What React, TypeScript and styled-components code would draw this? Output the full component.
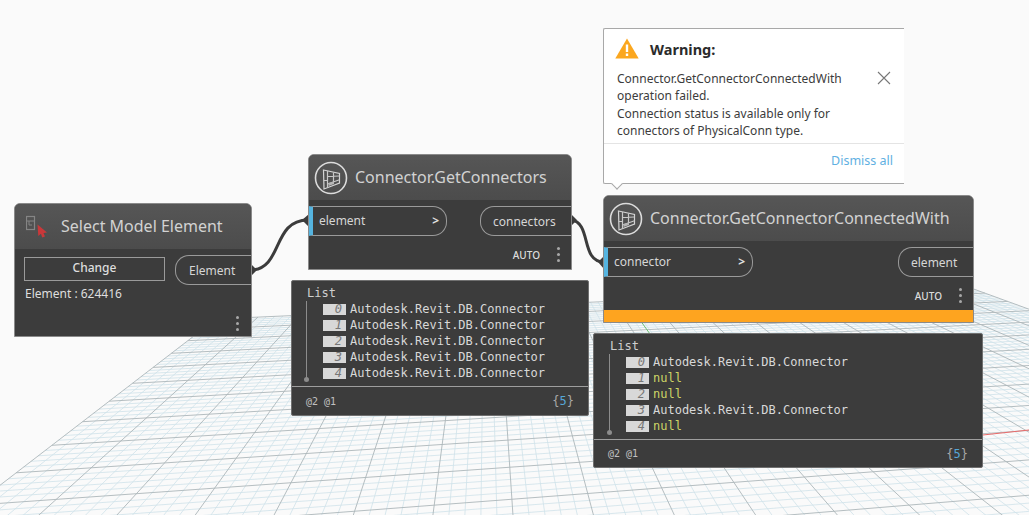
import React from "react";
import styled, { createGlobalStyle } from "styled-components";

const Global = createGlobalStyle`
  html, body { margin: 0; padding: 0; width: 1029px; height: 515px; overflow: hidden; background: #fafafa; }
  * { box-sizing: border-box; }
`;

const UI = `"Noto Sans", "Open Sans", sans-serif`;
const MONO = `"DejaVu Sans Mono", "Liberation Mono", monospace`;

const Canvas = styled.div`
  position: relative;
  width: 1029px;
  height: 515px;
  overflow: hidden;
  background: #fafafa;
  font-family: ${UI};
`;

const Backdrop = styled.svg`
  position: absolute;
  left: 0;
  top: 0;
`;

const Node = styled.section<{ $x: number; $y: number; $w: number; $h: number }>`
  position: absolute;
  left: ${(p) => p.$x}px;
  top: ${(p) => p.$y}px;
  width: ${(p) => p.$w}px;
  height: ${(p) => p.$h}px;
  display: flex;
  flex-direction: column;
  background: #3c3c3c;
  border: 1px solid #8a8a8a;
  border-radius: 6px 6px 0 0;
  overflow: hidden;
`;

const Header = styled.header<{ $pad: number; $gap: number }>`
  flex: none;
  height: 45px;
  display: flex;
  align-items: center;
  gap: ${(p) => p.$gap}px;
  padding-left: ${(p) => p.$pad}px;
  background: linear-gradient(#565656, #4c4c4c);
`;

const Title = styled.h2`
  margin: 0 0 2px;
  font-size: 16px;
  font-weight: 400;
  color: #d2d2d2;
  white-space: nowrap;
`;

const Ports = styled.div`
  flex: none;
  display: flex;
  justify-content: space-between;
  align-items: flex-start;
  padding-top: 6px;
`;

const InPort = styled.div<{ $w: number }>`
  width: ${(p) => p.$w}px;
  height: 30px;
  display: flex;
  align-items: center;
  justify-content: space-between;
  padding: 0 7px 2px 6px;
  border: 1px solid #9a9a9a;
  border-left: 4px solid #55b4e0;
  border-radius: 0 14px 14px 0;
  color: #d6d6d6;
  font-size: 12px;
`;

const Chevron = styled.span`
  font-size: 12px;
  font-weight: 700;
  color: #e0e0e0;
`;

const OutPort = styled.div<{ $w: number; $pad: number }>`
  width: ${(p) => p.$w}px;
  height: 30px;
  display: flex;
  align-items: center;
  padding-left: ${(p) => p.$pad}px;
  border: 1px solid #9a9a9a;
  border-right: none;
  border-radius: 14px 0 0 14px;
  color: #d6d6d6;
  font-size: 12px;
`;

const Footer = styled.footer`
  flex: 1;
  display: flex;
  align-items: center;
  justify-content: flex-end;
  gap: 17px;
  padding: 4px 11px 0 0;
`;

const Auto = styled.span`
  font-size: 10px;
  font-weight: 500;
  color: #dcdcdc;
`;

const Dots = styled.span`
  display: flex;
  flex-direction: column;
  gap: 3px;
  & > i {
    display: block;
    width: 3px;
    height: 3px;
    border-radius: 50%;
    background: #a8a8a8;
  }
`;

const Stripe = styled.div`
  flex: none;
  height: 12px;
  background: #fea41f;
`;

const SelectBody = styled.div`
  flex: 1;
  display: grid;
  grid-template-columns: 141px 76px;
  justify-content: space-between;
  grid-template-rows: auto 1fr;
  padding: 6px 0 0 9px;
  position: relative;
`;

const ChangeButton = styled.button`
  height: 24px;
  margin-top: 2px;
  padding: 0 0 3px;
  background: transparent;
  border: 1px solid #9a9a9a;
  color: #dedede;
  font: 500 12px ${UI};
`;

const ElementId = styled.div`
  grid-column: 1 / 2;
  margin: 0 0 0 1px;
  font-size: 12px;
  color: #dedede;
`;

const MenuSlot = styled.div`
  grid-column: 1 / 3;
  display: flex;
  justify-content: flex-end;
  align-items: flex-end;
  padding: 0 12px 5px 0;
`;

const Watch = styled.section<{ $x: number; $y: number; $w: number; $h: number }>`
  position: absolute;
  left: ${(p) => p.$x}px;
  top: ${(p) => p.$y}px;
  width: ${(p) => p.$w}px;
  height: ${(p) => p.$h}px;
  display: flex;
  flex-direction: column;
  background: #3c3c3c;
  border: 1px solid #707070;
  border-radius: 2px;
  font-family: ${MONO};
`;

const WatchBody = styled.div<{ $pad: number }>`
  flex: none;
  height: 106px;
  padding: 5px 0 0 ${(p) => p.$pad}px;
  border-bottom: 1px solid #9e9e9e;
`;

const ListLabel = styled.div`
  font-size: 12px;
  line-height: 14px;
  color: #cfcfcf;
`;

const Tree = styled.div`
  position: relative;
  padding: 1px 0 0 16px;
  &::before {
    content: "";
    position: absolute;
    left: -1px;
    top: 1px;
    width: 1px;
    height: 78px;
    background: #8c8c8c;
  }
  &::after {
    content: "";
    position: absolute;
    left: -3px;
    top: 77px;
    width: 5px;
    height: 5px;
    border-radius: 50%;
    background: #8c8c8c;
  }
`;

const Row = styled.div`
  height: 16px;
  display: flex;
  align-items: center;
  gap: 4px;
`;

const Index = styled.span`
  flex: none;
  width: 23px;
  height: 11px;
  padding-right: 4px;
  background: #d8d8d8;
  color: #777;
  font-size: 12px;
  font-style: italic;
  line-height: 11px;
  text-align: right;
`;

const Value = styled.span<{ $null?: boolean }>`
  font-size: 12px;
  color: ${(p) => (p.$null ? "#cdd566" : "#d8d8d8")};
  white-space: nowrap;
`;

const WatchFoot = styled.div`
  flex: 1;
  display: flex;
  align-items: center;
  justify-content: space-between;
  padding: 0 14px 0 14px;
`;

const Levels = styled.span`
  font-size: 10px;
  color: #c0c0c0;
`;

const Count = styled.span`
  font-size: 12px;
  color: #a8a8a8;
  & > b {
    font-weight: 400;
    color: #55a7d8;
  }
`;

const Popup = styled.aside`
  position: absolute;
  left: 603px;
  top: 28px;
  width: 301px;
  height: 156px;
  display: flex;
  flex-direction: column;
  background: #fff;
  border: 1px solid #a8a8a8;
  border-right: none;
  border-radius: 2px 0 0 2px;
  &::after {
    content: "";
    position: absolute;
    left: 9px;
    bottom: -5px;
    width: 7px;
    height: 7px;
    background: #fff;
    border-right: 1px solid #a8a8a8;
    border-bottom: 1px solid #a8a8a8;
    transform: rotate(45deg);
  }
`;

const PopupHead = styled.div`
  flex: none;
  height: 41px;
  display: flex;
  align-items: center;
  gap: 11px;
  padding: 0 0 2px 11px;
`;

const PopupTitle = styled.strong`
  font-size: 14.5px;
  font-weight: 700;
  color: #2b2b2b;
`;

const PopupMain = styled.div`
  flex: none;
  height: 74px;
  display: flex;
  justify-content: space-between;
  padding: 0 13px 0 13px;
  border-bottom: 1px solid #e4e4e4;
`;

const Message = styled.p`
  margin: 0;
  font-size: 12px;
  line-height: 17.3px;
  color: #3c3c3c;
  white-space: nowrap;
`;

const Close = styled.svg`
  flex: none;
  margin-top: 1px;
`;

const PopupFoot = styled.div`
  flex: 1;
  display: flex;
  align-items: center;
  justify-content: flex-end;
  padding: 0 11px 6px 0;
`;

const Dismiss = styled.a`
  font-size: 12.5px;
  color: #5fb0e2;
`;

/* ---------- perspective ground grid ---------- */
type P = [number, number];
const A: P = [216, 319];
const B: P = [964, 285.5];
const C: P = [-214, 650];
const D: P = [1533, 493];

function homography() {
  const [x0, y0] = A, [x1, y1] = B, [x2, y2] = D, [x3, y3] = C;
  const dx1 = x1 - x2, dx2 = x3 - x2, sx = x0 - x1 + x2 - x3;
  const dy1 = y1 - y2, dy2 = y3 - y2, sy = y0 - y1 + y2 - y3;
  const det = dx1 * dy2 - dx2 * dy1;
  const g = (sx * dy2 - dx2 * sy) / det;
  const h = (dx1 * sy - sx * dy1) / det;
  const a = x1 - x0 + g * x1, b = x3 - x0 + h * x3, c = x0;
  const d = y1 - y0 + g * y1, e = y3 - y0 + h * y3, f = y0;
  return (u: number, v: number): P => {
    const w = g * u + h * v + 1;
    return [(a * u + b * v + c) / w, (d * u + e * v + f) / w];
  };
}

const COLS = 100;
const ROWS = 65;

function gridPaths() {
  const map = homography();
  let minor = "";
  let major = "";
  const seg = (p: P, q: P) => `M${p[0].toFixed(1)} ${p[1].toFixed(1)}L${q[0].toFixed(1)} ${q[1].toFixed(1)}`;
  for (let i = 0; i <= COLS; i++) {
    const s = seg(map(i / COLS, 0), map(i / COLS, 1));
    if (i % 5 === 0) major += s;
    else minor += s;
  }
  for (let j = 0; j <= ROWS; j++) {
    const s = seg(map(0, j / ROWS), map(1, j / ROWS));
    if (j % 5 === 0) major += s;
    else minor += s;
  }
  return { minor, major };
}

const grid = gridPaths();

/* ---------- drawings ---------- */
const dots = (
  <Dots>
    <i />
    <i />
    <i />
  </Dots>
);

const CircleGlyph = () => (
  <svg width="34" height="34" viewBox="0 0 34 34" fill="none">
    <circle cx="17" cy="17" r="15.5" stroke="#dcdcdc" strokeWidth="1.6" />
    <path d="M9.5 9 L25.5 12.5 V22 L10 28 Z" stroke="#d4d4d4" strokeWidth="1.2" />
    <path d="M13.5 10 V26.5 M13.5 15.5 L25.5 15 M9.8 19.5 H13.5 M13.5 23 L25.5 18.8 M19.5 11.5 V20.5" stroke="#c8c8c8" strokeWidth="1.2" />
    <path d="M14.5 22 L20 20.5 L20 23 L14.5 25 Z" fill="#b5b5b5" />
  </svg>
);

const SelectGlyph = () => (
  <svg width="26" height="24" viewBox="0 0 26 24" fill="none">
    <rect x="0.5" y="1.5" width="8" height="13" stroke="#858585" strokeWidth="1.2" />
    <path d="M0.5 6H8.5M3 6V10H6" stroke="#858585" strokeWidth="1" />
    <path d="M11.5 9.5 L21 17.5 L17.5 18 L19 21.6 L16.2 22.4 L15 18.8 L12.3 21 Z" fill="#c9383a" />
  </svg>
);

const Warn = () => (
  <svg width="24" height="21" viewBox="0 0 24 21">
    <path d="M12 0.5 L23.7 20.6 H0.3 Z" fill="#fba71f" />
    <rect x="10.8" y="6.5" width="2.4" height="7.5" fill="#fff" />
    <rect x="10.8" y="15.5" width="2.4" height="2.5" fill="#fff" />
  </svg>
);

const rows = ["0", "1", "2", "3", "4"];
const VAL = "Autodesk.Revit.DB.Connector";

export default function App() {
  return (
    <Canvas>
      <Global />
      <Backdrop width="1029" height="515" viewBox="0 0 1029 515" fill="none">
        <path d={grid.minor} stroke="#cfe2ea" strokeWidth="0.8" />
        <path d={grid.major} stroke="#adb7ba" strokeWidth="0.9" />
        <path d="M640 320 L650 334" stroke="#6fbf73" strokeWidth="1" />
        <path d="M900 444 L1029 430" stroke="#e86a6a" strokeWidth="1" />
        <path d="M252 270 C283 268 272 220 308 220" stroke="#3c3c3c" strokeWidth="3" />
        <path d="M571 220 C592 222 580 262 604 262" stroke="#3c3c3c" strokeWidth="3" />
        <path d="M251 264 L257 270 L251 276 Z M302 220 L309 214 L309 227 Z M571 214 L577 220 L571 226 Z M598 262 L604 256 L604 269 Z" fill="#3c3c3c" />
      </Backdrop>

      <Node $x={14} $y={203} $w={238} $h={134}>
        <Header $pad={11} $gap={9}>
          <SelectGlyph />
          <Title>Select Model Element</Title>
        </Header>
        <SelectBody>
          <ChangeButton>Change</ChangeButton>
          <OutPort $w={76} $pad={13}>Element</OutPort>
          <ElementId>Element : 624416</ElementId>
          <MenuSlot>{dots}</MenuSlot>
        </SelectBody>
      </Node>

      <Node $x={308} $y={154} $w={264} $h={116}>
        <Header $pad={5} $gap={7}>
          <CircleGlyph />
          <Title>Connector.GetConnectors</Title>
        </Header>
        <Ports>
          <InPort $w={138}>
            element<Chevron>&gt;</Chevron>
          </InPort>
          <OutPort $w={91} $pad={12}>connectors</OutPort>
        </Ports>
        <Footer>
          <Auto>AUTO</Auto>
          {dots}
        </Footer>
      </Node>

      <Watch $x={291} $y={280} $w={298} $h={136}>
        <WatchBody $pad={15}>
          <ListLabel>List</ListLabel>
          <Tree>
            {rows.map((r) => (
              <Row key={r}>
                <Index>{r}</Index>
                <Value>{VAL}</Value>
              </Row>
            ))}
          </Tree>
        </WatchBody>
        <WatchFoot>
          <Levels>@2 @1</Levels>
          <Count>
            {"{"}
            <b>5</b>
            {"}"}
          </Count>
        </WatchFoot>
      </Watch>

      <Node $x={603} $y={195} $w={371} $h={128}>
        <Header $pad={5} $gap={7}>
          <CircleGlyph />
          <Title>Connector.GetConnectorConnectedWith</Title>
        </Header>
        <Ports>
          <InPort $w={149}>
            connector<Chevron>&gt;</Chevron>
          </InPort>
          <OutPort $w={75} $pad={12}>element</OutPort>
        </Ports>
        <Footer>
          <Auto>AUTO</Auto>
          {dots}
        </Footer>
        <Stripe />
      </Node>

      <Watch $x={593} $y={333} $w={390} $h={135}>
        <WatchBody $pad={16}>
          <ListLabel>List</ListLabel>
          <Tree>
            {rows.map((r) => {
              const isNull = r === "1" || r === "2" || r === "4";
              return (
                <Row key={r}>
                  <Index>{r}</Index>
                  <Value $null={isNull}>{isNull ? "null" : VAL}</Value>
                </Row>
              );
            })}
          </Tree>
        </WatchBody>
        <WatchFoot>
          <Levels>@2 @1</Levels>
          <Count>
            {"{"}
            <b>5</b>
            {"}"}
          </Count>
        </WatchFoot>
      </Watch>

      <Popup>
        <PopupHead>
          <Warn />
          <PopupTitle>Warning:</PopupTitle>
        </PopupHead>
        <PopupMain>
          <Message>
            Connector.GetConnectorConnectedWith
            <br />
            operation failed.
            <br />
            Connection status is available only for
            <br />
            connectors of PhysicalConn type.
          </Message>
          <Close width="14" height="14" viewBox="0 0 14 14" fill="none">
            <path d="M1 1 L13 13 M13 1 L1 13" stroke="#777" strokeWidth="1.1" />
          </Close>
        </PopupMain>
        <PopupFoot>
          <Dismiss>Dismiss all</Dismiss>
        </PopupFoot>
      </Popup>
    </Canvas>
  );
}
